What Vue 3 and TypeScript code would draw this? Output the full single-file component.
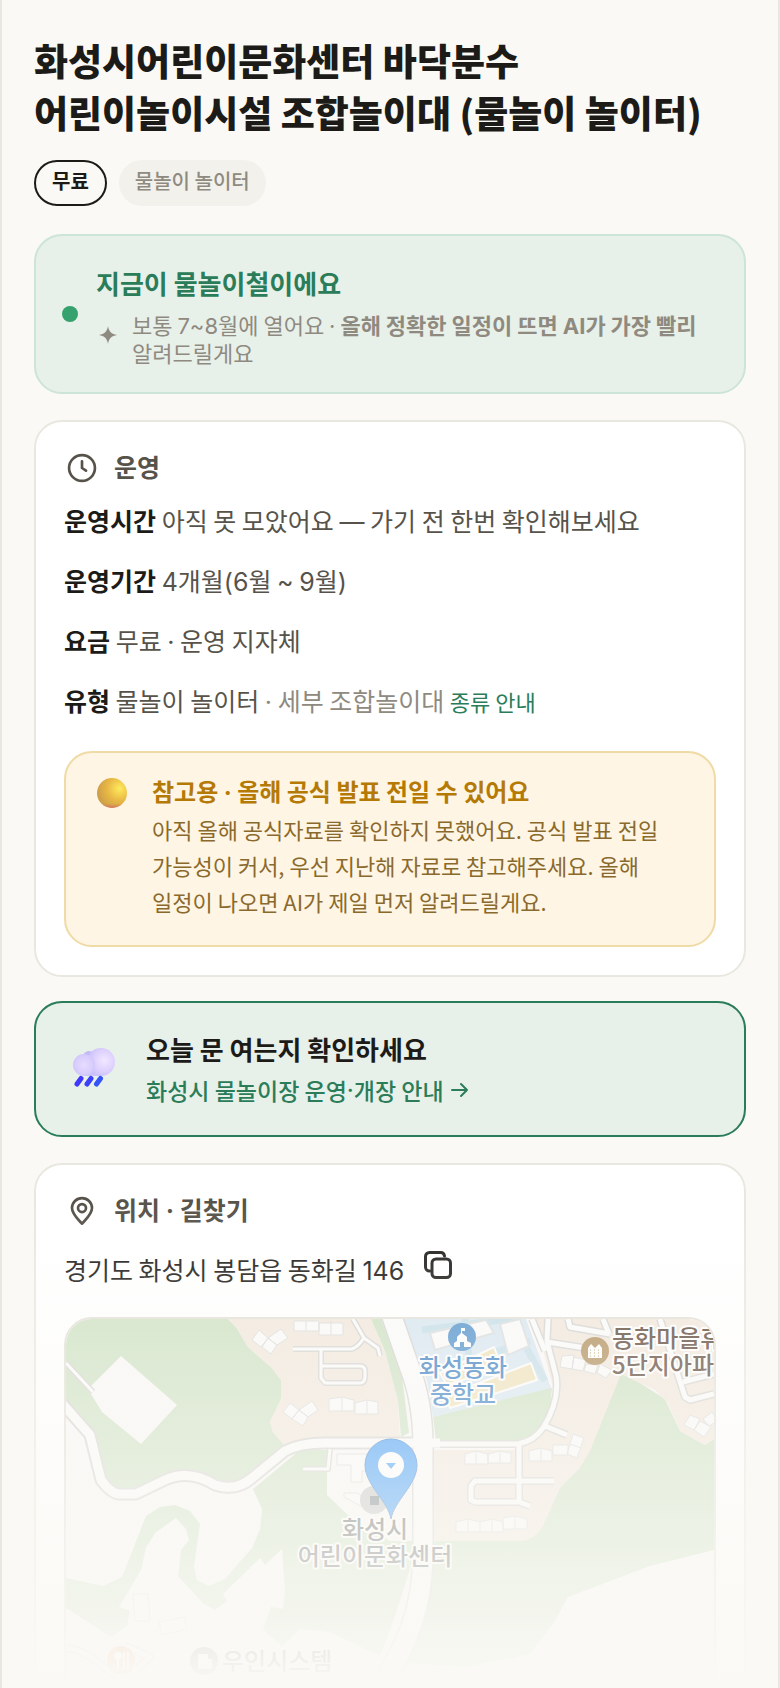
<script setup lang="ts">
import { h } from 'vue'
import type { VNode } from 'vue'

interface InfoRow {
  label: string
  text: string
}

const rows: InfoRow[] = [
  { label: '운영시간', text: '아직 못 모았어요 — 가기 전 한번 확인해보세요' },
  { label: '운영기간', text: '4개월(6월 ~ 9월)' },
  { label: '요금', text: '무료 · 운영 지자체' },
]

const address = '경기도 화성시 봉담읍 동화길 146'

// Sets digits, Latin letters and dashes in the Latin face, Hangul in the page face.
const Mixed = (props: { text: string }): (VNode | string)[] =>
  props.text
    .split(/([0-9A-Za-z()~·—]+)/)
    .filter((part) => part !== '')
    .map((part) => (/^[0-9A-Za-z()~·—]/.test(part) ? h('span', { class: 'latin' }, part) : part))
Mixed.props = ['text']

function copyAddress(): void {
  navigator.clipboard?.writeText(address)
}
</script>

<template>
  <main class="page">
    <header class="head">
      <h1>화성시어린이문화센터 바닥분수<br />어린이놀이시설 조합놀이대 (물놀이 놀이터)</h1>
      <div class="badges">
        <span class="badge badge-free">무료</span>
        <span class="badge badge-kind">물놀이 놀이터</span>
      </div>
    </header>

    <section class="season">
      <span class="dot"></span>
      <div class="season-body">
        <h2>지금이 물놀이철이에요</h2>
        <div class="season-note">
          <svg class="spark" viewBox="0 0 24 24" aria-hidden="true">
            <path d="M12 3C12.800 8.500 15.500 11.200 21 12C15.500 12.800 12.800 15.500 12 21C11.200 15.500 8.500 12.800 3 12C8.500 11.200 11.200 8.500 12 3Z" fill="currentColor" />
          </svg>
          <p><Mixed text="보통 7~8월에 열어요 · " /><strong><Mixed text="올해 정확한 일정이 뜨면 AI가 가장 빨리" /></strong> 알려드릴게요</p>
        </div>
      </div>
    </section>

    <section class="card">
      <h2 class="card-title">
        <svg class="title-icon" viewBox="0 0 24 24" aria-hidden="true">
          <circle cx="12" cy="12" r="9.700" />
          <path d="M12 7v5l3 2" />
        </svg>
        <span>운영</span>
      </h2>
      <p v-for="row in rows" :key="row.label" class="row"><b>{{ row.label }}</b> <Mixed :text="row.text" /></p>
      <p class="row"><b>유형</b> 물놀이 놀이터 <span class="muted"><Mixed text="· 세부 조합놀이대" /></span> <a class="kind-link" href="#kinds">종류 안내</a></p>

      <div class="notice">
        <svg class="orb" viewBox="0 0 32 32" aria-hidden="true">
          <defs>
            <radialGradient id="orbFill" cx="0.75" cy="0.35" r="0.8">
              <stop offset="0" stop-color="#ffea5c" />
              <stop offset="0.5" stop-color="#e9b945" />
              <stop offset="1" stop-color="#c99a48" />
            </radialGradient>
            <linearGradient id="orbEdge" x1="0" y1="0" x2="0" y2="1">
              <stop offset="0.86" stop-color="#d86a6a" stop-opacity="0" />
              <stop offset="1" stop-color="#d86a6a" stop-opacity="0.8" />
            </linearGradient>
          </defs>
          <circle cx="16" cy="16" r="15" fill="url(#orbFill)" />
          <circle cx="16" cy="16" r="15" fill="url(#orbEdge)" />
        </svg>
        <div>
          <h3><Mixed text="참고용 · 올해 공식 발표 전일 수 있어요" /></h3>
          <p>아직 올해 공식자료를 확인하지 못했어요. 공식 발표 전일 가능성이 커서, 우선 지난해 자료로 참고해주세요. 올해 일정이 나오면 AI가 제일 먼저 알려드릴게요.</p>
        </div>
      </div>
    </section>

    <a class="today" href="#open">
      <svg class="cloud" viewBox="0 0 44 44" aria-hidden="true">
        <defs>
          <radialGradient id="cloudBig" cx="0.62" cy="0.45" r="0.62">
            <stop offset="0" stop-color="#f1e8ff" />
            <stop offset="0.6" stop-color="#ddd1fe" />
            <stop offset="1" stop-color="#c9bff9" />
          </radialGradient>
          <radialGradient id="cloudSmall" cx="0.5" cy="0.5" r="0.6">
            <stop offset="0" stop-color="#e6dbfe" />
            <stop offset="0.6" stop-color="#dacffd" />
            <stop offset="1" stop-color="#c9c0f8" />
          </radialGradient>
        </defs>
        <circle cx="17" cy="10" r="6" fill="#c2baf5" />
        <path d="M12 17H30V29H12Z" fill="#cdc2fa" />
        <circle cx="29" cy="15" r="14" fill="url(#cloudBig)" />
        <circle cx="12" cy="18" r="11" fill="url(#cloudSmall)" />
        <g stroke-width="5" stroke-linecap="round">
          <path d="M9 31.500L5 37" stroke="#4238fb" />
          <path d="M19 31.500L15 37" stroke="#3c40fb" />
          <path d="M28.500 31.500L24.500 37" stroke="#3454f8" />
        </g>
      </svg>
      <span class="today-text">
        <strong>오늘 문 여는지 확인하세요</strong>
        <span class="today-link"><Mixed text="화성시 물놀이장 운영·개장 안내" />
          <svg class="arrow" viewBox="0 0 20 20" aria-hidden="true"><path d="M2 10h15M11 4l6 6-6 6" /></svg>
        </span>
      </span>
    </a>

    <section class="card place">
      <h2 class="card-title">
        <svg class="title-icon" viewBox="0 0 24 24" aria-hidden="true">
          <path d="M12 21.500C9 18 4.500 14.500 4.500 9.800a7.500 7.500 0 0 1 15 0C19.500 14.500 15 18 12 21.500Z" />
          <circle cx="12" cy="9.800" r="3" />
        </svg>
        <span><Mixed text="위치 · 길찾기" /></span>
      </h2>
      <div class="address">
        <span><Mixed :text="address" /></span>
        <button type="button" class="copy" aria-label="주소 복사" @click="copyAddress">
          <svg viewBox="0 0 28 28" aria-hidden="true">
            <rect x="8" y="8" width="18.500" height="18.500" rx="4" />
            <path d="M6 20H5.500a4 4 0 0 1-4-4V5.500a4 4 0 0 1 4-4h11a4 4 0 0 1 4 3.500" />
          </svg>
        </button>
      </div>
      <div class="map">
        <svg viewBox="66 1318 648 420" preserveAspectRatio="xMidYMin slice" role="img" aria-label="지도">
          <rect x="66" y="1318" width="648" height="420" fill="#f9f8f7" />
          <!-- woods -->
          <path fill="#cfe2c4" d="M66 1318H228L236 1326L248 1346L272 1367L281 1379V1398L270 1421L273 1431L285 1445L253 1476L238 1483L220 1484L175 1471L150 1487L119 1490L105 1479L92 1431L66 1398Z" />
          <path fill="#f9f8f7" d="M121 1355L177 1404L141 1443L102 1411L91 1393V1385Z" />
          <path fill="#cfe2c4" d="M253 1488L300 1449H327V1494L350 1516L390 1540H415V1552L395 1615L380 1655L330 1631L300 1628L282 1645L263 1629L271 1606L283 1608L285 1590L282 1548L265 1564L260 1557L223 1593L227 1600L215 1609L204 1603L178 1575L181 1549L189 1539L186 1528L176 1517L155 1532L146 1547L141 1569L119 1606L130 1610L127 1625L111 1636L66 1607V1577L103 1585L122 1576L146 1515L160 1506L175 1504L190 1510L200 1523L194 1566L197 1579L209 1585L225 1578L252 1547L260 1528L262 1508Z" />
          <path fill="#cfe2c4" d="M437 1530L520 1500L580 1440L620 1372L640 1382L665 1398L680 1430L705 1444L714 1438V1549L650 1565L568 1596L555 1620L530 1653L465 1666L407 1662Z" />
          <path fill="#cfe2c4" d="M433 1416L540 1387H552L550 1410L536 1433L515 1440H436Z" />
          <!-- neighbourhoods -->
          <path fill="#f2e8dd" d="M228 1318H371L385 1350L398 1400L400 1438H310L285 1445L273 1431L270 1421L281 1398V1379L272 1367L248 1346L236 1326Z" />
          <path fill="#cfe2c4" d="M371 1318H381L402 1375L409 1432L401 1436L398 1400L385 1350Z" />
          <path fill="#f2e8dd" d="M434 1449H520L546 1425L554 1390L535 1318H714V1438L705 1444L680 1430L668 1402L655 1389L621 1373L590 1450L580 1467L560 1487L544 1523Q535 1540 520 1540H434Z" />
          <!-- school -->
          <path fill="#d8e7f1" d="M402 1318H526L551 1387L433 1416L427 1380Z" />
          <path d="M422 1329L510 1318M435 1370L530 1340M465 1318L470 1365M510 1318L545 1380" stroke="#c6dfe9" stroke-width="7" fill="none" />
          <g fill="#efe2bb" stroke="#fdfcfa" stroke-width="2">
            <path d="M440 1372L494 1346L502 1366L447 1384Z" />
            <path d="M446 1395L531 1362L537 1379L450 1407Z" />
          </g>
          <g fill="#fafafa" stroke="#dbdedf" stroke-width="2">
            <path d="M430 1332L481 1320L486 1319L494 1332L435 1349Z" />
            <path d="M500 1323L520 1318L529 1345L508 1354Z" />
          </g>
          <!-- road edges -->
          <g fill="none" stroke="#d5d4d2" stroke-linejoin="round">
            <path stroke-width="22" d="M390 1310L409 1365Q423 1400 423 1445V1550C423 1610 407 1640 380 1690" />
            <path stroke-width="13" d="M60 1400L90 1434L101 1479Q112 1494 121 1493H136L165 1479Q189 1468 215 1484Q236 1491 252 1477L285 1450Q300 1442 325 1442H412" />
            <path stroke-width="8" d="M434 1443H518Q534 1440 543 1427Q560 1400 556 1375L547 1340L548 1318M519 1443V1501L530 1505M554 1480H475L471 1485V1499L475 1501H518M545 1425L567 1434M547 1341L585 1347M568 1318L570 1326L610 1333M603 1318L609 1333M660 1318L685 1396L690 1399L714 1393M683 1381L714 1373M532 1318L545 1350" />
            <path stroke-width="6" d="M293 1348H352Q358 1346 364 1337L378 1347L380 1355M353 1318L364 1337M321 1348V1377L325 1382H360Q365 1382 365 1375V1370Q365 1365 360 1365H321M303 1468H328L330 1448M66 1362L93 1391" />
            <path stroke-width="8" d="M66 1647Q82 1648 96 1660L130 1685M125 1645L150 1656L120 1685" />
          </g>
          <!-- road surfaces -->
          <g fill="none" stroke="#fbfbfa" stroke-linejoin="round">
            <path stroke-width="19" d="M390 1310L409 1365Q423 1400 423 1445V1550C423 1610 407 1640 380 1690" />
            <path stroke-width="9" d="M60 1400L90 1434L101 1479Q112 1494 121 1493H136L165 1479Q189 1468 215 1484Q236 1491 252 1477L285 1450Q300 1442 325 1442H440" />
            <path stroke-width="5" d="M430 1443H518Q534 1440 543 1427Q560 1400 556 1375L547 1340L548 1318M519 1443V1501L530 1505M554 1480H475L471 1485V1499L475 1501H518M545 1425L567 1434M547 1341L585 1347M568 1318L570 1326L610 1333M603 1318L609 1333M660 1318L685 1396L690 1399L714 1393M683 1381L714 1373M532 1318L545 1350" />
            <path stroke-width="3" d="M293 1348H352Q358 1346 364 1337L378 1347L380 1355M353 1318L364 1337M321 1348V1377L325 1382H360Q365 1382 365 1375V1370Q365 1365 360 1365H321M303 1468H328L330 1448M66 1362L93 1391" />
            <path stroke-width="5" d="M66 1647Q82 1648 96 1660L130 1685M125 1645L150 1656L120 1685" />
          </g>
          <!-- houses -->
          <g fill="#fafafa" stroke="#dcdbd9" stroke-width="1">
            <path d="M294 1320H319V1330H294ZM306 1320V1330M319 1322H343V1334H319ZM331 1320V1334" />
            <path d="M259 1329L268 1337L261 1346L252 1339ZM268 1337L281 1328L288 1337L277 1344ZM268 1337L277 1344L271 1353L262 1346Z" />
            <path d="M290 1402L299 1409L292 1418L283 1411ZM299 1409L312 1400L318 1409L308 1416ZM299 1409L308 1416L303 1425L292 1418Z" />
            <path d="M329 1398L342 1396L354 1399V1410H329ZM342 1396V1410M355 1402L367 1399L378 1401V1413H355ZM367 1399V1413" />
            <path d="M465 1453L476 1450L488 1453V1463H465ZM476 1450V1463M488 1453L500 1450L511 1452V1462H488ZM500 1450V1462" />
            <path d="M529 1450L541 1447L552 1450V1460H529ZM541 1447V1460M553 1444H568V1454H553ZM573 1433L584 1437L577 1457L567 1453ZM570 1443L581 1447" />
            <path d="M456 1521L468 1518L480 1521L492 1518L503 1521V1531H456ZM468 1518V1531M480 1521V1531M492 1518V1531M503 1517L515 1515L527 1518V1528H503ZM515 1515V1528" />
            <path d="M562 1355L574 1354L572 1368L560 1366ZM574 1356L586 1359L583 1370L572 1368ZM586 1363L598 1364L595 1373L584 1370ZM600 1363L612 1369L606 1377L597 1372Z" />
            <path d="M690 1414L700 1418L694 1429L684 1424ZM700 1420L711 1426L704 1436L694 1429ZM703 1418L712 1411L718 1420L709 1425Z" />
            <path d="M337 1453H375V1470H362V1481H351V1464H337ZM344 1492H358L366 1500V1508L344 1496Z" />
            <path d="M133 1593H148L150 1620H135ZM159 1621L184 1616L187 1628L162 1634Z" />
          </g>
          <!-- place marks -->
          <circle cx="462" cy="1336" r="14" fill="#5594cd" />
          <path fill="#fff" d="M461 1327H465V1330H462V1332L467 1336V1340L471 1342V1346H464V1341H460V1346H454V1342L457 1340V1336L461 1332Z" />
          <circle cx="595" cy="1350" r="14" fill="#b2905f" />
          <path fill="#fff" d="M588 1347L591 1343L595 1347L599 1343L602 1347V1357H588Z" />
          <path stroke="#b2905f" stroke-width="1" stroke-dasharray="1 3" d="M590 1349H602M590 1352H602M590 1355H602" />
          <circle cx="374" cy="1499" r="14" fill="#c4c4c4" />
          <rect x="370" y="1495" width="9" height="9" fill="#737f84" />
          <circle cx="121" cy="1659" r="14" fill="#f2a36b" />
          <path stroke="#fff" stroke-width="2" d="M118 1658V1668M124 1651V1668M128 1651V1668" />
          <circle cx="118" cy="1655" r="4" fill="#fff" />
          <circle cx="204" cy="1660" r="14" fill="#85888c" />
          <path fill="#fff" d="M198 1653H208V1658H212V1668H198Z" />
          <g class="map-text">
            <g fill="#3c80c4" text-anchor="middle">
              <text x="463" y="1375">화성동화</text>
              <text x="463" y="1402">중학교</text>
            </g>
            <g fill="#5d4638">
              <text x="612" y="1346">동화마을휴</text>
              <text x="612" y="1373">5단지아파</text>
            </g>
            <g fill="#5e6062" text-anchor="middle">
              <text x="375" y="1537">화성시</text>
              <text x="375" y="1564">어린이문화센터</text>
            </g>
            <text x="222" y="1669" fill="#5e6062">우인시스템</text>
          </g>
          <path d="M391 1518C388 1500 365 1484 365 1464a26 26 0 0 1 52 0C417 1484 394 1500 391 1518Z" fill="#409df8" stroke="#3c7fd0" stroke-width="1" />
          <circle cx="391" cy="1464" r="13" fill="#fff" />
          <path d="M386 1462H396L391 1468Z" fill="#409df8" />
        </svg>
      </div>
    </section>
    <div class="fade" aria-hidden="true"></div>
  </main>
</template>

<style>
body {
  background: #faf9f5;
}
.latin {
  font-family: Inter, "Noto Sans CJK KR", sans-serif;
  line-height: 1;
}
</style>

<style scoped>
.page {
  position: relative;
  box-sizing: border-box;
  height: 100vh;
  overflow: hidden;
  padding: 34px 32px 0;
  border: 0 solid #e9e8e0;
  border-width: 0 2px;
  background: #faf9f5;
  color: #1c1b18;
  font-family: "Noto Sans CJK KR", sans-serif;
  font-size: 25px;
  word-break: keep-all;
}
.page * {
  box-sizing: border-box;
}
h1,
h2,
h3,
p {
  margin: 0;
}
h1 {
  font-size: 37px;
  line-height: 52px;
  font-weight: 800;
}
.badges {
  display: flex;
  gap: 12px;
  margin-top: 22px;
}
.badge {
  height: 46px;
  padding: 0 16px;
  border: 2px solid transparent;
  border-radius: 23px;
  font-size: 20px;
  line-height: 38px;
}
.badge-free {
  border-color: #1c1b18;
  font-weight: 700;
}
.badge-kind {
  padding: 0 14px;
  background: #f2f1ec;
  color: #8f8a80;
  font-weight: 500;
}
.season {
  display: flex;
  align-items: center;
  gap: 18px;
  min-height: 160px;
  margin-top: 28px;
  padding: 24px 26px;
  border: 2px solid #cde4d8;
  border-radius: 28px;
  background: #e8f0ea;
}
.dot {
  flex: none;
  width: 16px;
  height: 16px;
  border-radius: 50%;
  background: #35a16c;
}
.season h2 {
  color: #2b7d59;
  font-size: 26px;
  line-height: 42px;
}
.season-note {
  display: flex;
  align-items: center;
  gap: 12px;
  color: #8f8a80;
  font-size: 22px;
  line-height: 28px;
}
.season-note p {
  padding-top: 6px;
}
.spark {
  flex: none;
  width: 24px;
  height: 24px;
}
.card {
  margin-top: 26px;
  padding: 24px 28px 28px;
  border: 2px solid #e9e8e0;
  border-radius: 28px;
  background: #fff;
}
.card-title {
  display: flex;
  align-items: center;
  gap: 16px;
  height: 44px;
  padding-left: 2px;
  color: #57534a;
  font-size: 25px;
  line-height: 40px;
}
.card-title > span {
  padding-bottom: 4px;
}
.title-icon {
  flex: none;
  width: 32px;
  height: 32px;
  fill: none;
  stroke: currentColor;
  stroke-width: 2;
  stroke-linecap: round;
  stroke-linejoin: round;
}
.row {
  margin-top: 16px;
  color: #57534a;
  line-height: 44px;
}
.row b {
  color: #1c1b18;
}
.card-title + .row {
  margin-top: 8px;
}
.muted {
  color: #8f8a80;
}
.kind-link {
  color: #2b7d59;
  font-size: 22px;
  text-decoration: none;
}
.notice {
  display: flex;
  gap: 24px;
  margin-top: 28px;
  padding: 18px 54px 26px 30px;
  border: 2px solid #efdba5;
  border-radius: 28px;
  background: #fff5e4;
  color: #8a6a2c;
  font-size: 22px;
  line-height: 36px;
}
.orb {
  flex: none;
  width: 32px;
  height: 32px;
  margin-top: 6px;
}
.notice h3 {
  color: #b57a06;
  font-size: 24px;
  line-height: 40px;
}
.today {
  display: flex;
  align-items: center;
  gap: 30px;
  min-height: 136px;
  margin-top: 24px;
  padding: 20px 36px;
  border: 2px solid #2b7d59;
  border-radius: 28px;
  background: #e8f0ea;
  color: #1c1b18;
  text-decoration: none;
}
.cloud {
  flex: none;
  width: 44px;
  height: 44px;
}
.today-text {
  display: flex;
  flex-direction: column;
}
.today-text strong {
  font-size: 26px;
  line-height: 42px;
}
.today-link {
  display: flex;
  align-items: center;
  color: #2b7d59;
  font-size: 23px;
  line-height: 40px;
  font-weight: 500;
}
.arrow {
  width: 20px;
  height: 20px;
  margin-left: 6px;
  fill: none;
  stroke: currentColor;
  stroke-width: 2;
  stroke-linecap: round;
  stroke-linejoin: round;
}
.address {
  display: flex;
  align-items: center;
  gap: 20px;
  margin-top: 14px;
  line-height: 44px;
}
.copy {
  display: flex;
  padding: 0 0 8px;
  border: 0;
  background: none;
  color: #1c1b18;
}
.copy svg {
  width: 28px;
  height: 28px;
  fill: none;
  stroke: currentColor;
  stroke-width: 3;
  stroke-linecap: round;
}
.map {
  margin-top: 26px;
  overflow: hidden;
  border: 2px solid #e3e1d8;
  border-radius: 28px;
}
.map svg {
  display: block;
  width: 100%;
}
.map-text {
  font-size: 24px;
  font-weight: 500;
  stroke: #fff;
  stroke-width: 4px;
  stroke-linejoin: round;
  paint-order: stroke;
}
.fade {
  position: absolute;
  right: 0;
  bottom: 0;
  left: 0;
  height: 488px;
  background: linear-gradient(rgba(250, 249, 245, 0), #faf9f5);
  pointer-events: none;
}
</style>
